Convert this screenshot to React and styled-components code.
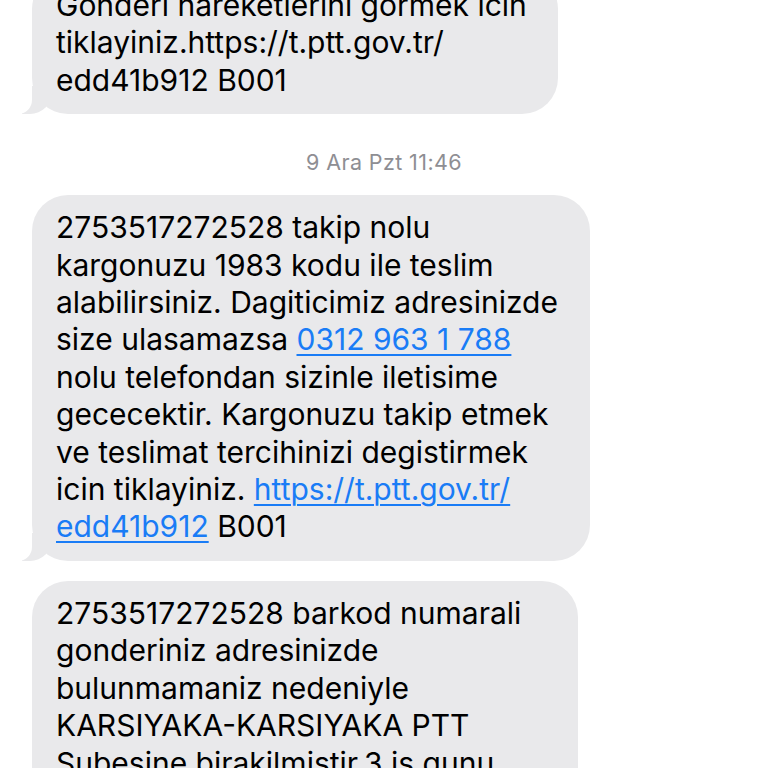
import React from "react";
import styled, { createGlobalStyle } from "styled-components";

const GlobalStyle = createGlobalStyle`
  html, body {
    margin: 0;
    padding: 0;
    background: #ffffff;
    height: 768px;
    overflow: hidden;
  }
  body {
    font-family: Inter, "Noto Sans", "Liberation Sans", sans-serif;
    -webkit-font-smoothing: antialiased;
  }
`;

const Thread = styled.div`
  display: flex;
  flex-direction: column;
  align-items: flex-start;
  width: 768px;
  padding: 0 32px;
  box-sizing: border-box;
  margin-top: -27px;
`;

const Bubble = styled.div`
  position: relative;
  box-sizing: border-box;
  width: ${(p) => p.$w}px;
  margin-top: ${(p) => p.$top || 0}px;
  padding: 14px 20px 15px 24px;
  background: #e9e9eb;
  border-radius: 36px;
  color: #000000;
  font-size: 30px;
  line-height: 37.4px;
  letter-spacing: 0;
  white-space: nowrap;

  &::before {
    content: "";
    position: absolute;
    bottom: 0;
    left: -10px;
    width: 30px;
    height: 28px;
    background: #e9e9eb;
    border-bottom-right-radius: 22px;
    display: ${(p) => (p.$tail ? "block" : "none")};
  }
  &::after {
    content: "";
    position: absolute;
    bottom: 0;
    left: -16px;
    width: 16px;
    height: 30px;
    background: #ffffff;
    border-bottom-right-radius: 14px;
    display: ${(p) => (p.$tail ? "block" : "none")};
  }
`;

const Line = styled.div``;

const Link = styled.span`
  color: #1a7cf6;
  text-decoration: underline;
  text-decoration-thickness: 2px;
  text-underline-offset: 4px;
`;

const Stamp = styled.div`
  align-self: center;
  margin: 36px 0 21px;
  color: #8e8e93;
  font-size: 21.5px;
  line-height: 24px;
  letter-spacing: 0.4px;
`;

export default function App() {
  return (
    <>
      <GlobalStyle />
      <Thread>
        <Bubble $w={526} $tail>
          <Line>Gonderi hareketlerini gormek icin</Line>
          <Line>tiklayiniz.https://t.ptt.gov.tr/</Line>
          <Line>edd41b912 B001</Line>
        </Bubble>

        <Stamp>9 Ara Pzt 11:46</Stamp>

        <Bubble $w={558} $tail>
          <Line>2753517272528 takip nolu</Line>
          <Line>kargonuzu 1983 kodu ile teslim</Line>
          <Line>alabilirsiniz. Dagiticimiz adresinizde</Line>
          <Line>
            size ulasamazsa <Link>0312 963 1 788</Link>
          </Line>
          <Line>nolu telefondan sizinle iletisime</Line>
          <Line>gececektir. Kargonuzu takip etmek</Line>
          <Line>ve teslimat tercihinizi degistirmek</Line>
          <Line>
            icin tiklayiniz. <Link>https://t.ptt.gov.tr/</Link>
          </Line>
          <Line>
            <Link>edd41b912</Link> B001
          </Line>
        </Bubble>

        <Bubble $w={546} $top={20}>
          <Line>2753517272528 barkod numarali</Line>
          <Line>gonderiniz adresinizde</Line>
          <Line>bulunmamaniz nedeniyle</Line>
          <Line>KARSIYAKA-KARSIYAKA PTT</Line>
          <Line>Subesine birakilmistir.3 is gunu</Line>
          <Line>icinde teslim alabilirsiniz.</Line>
        </Bubble>
      </Thread>
    </>
  );
}
